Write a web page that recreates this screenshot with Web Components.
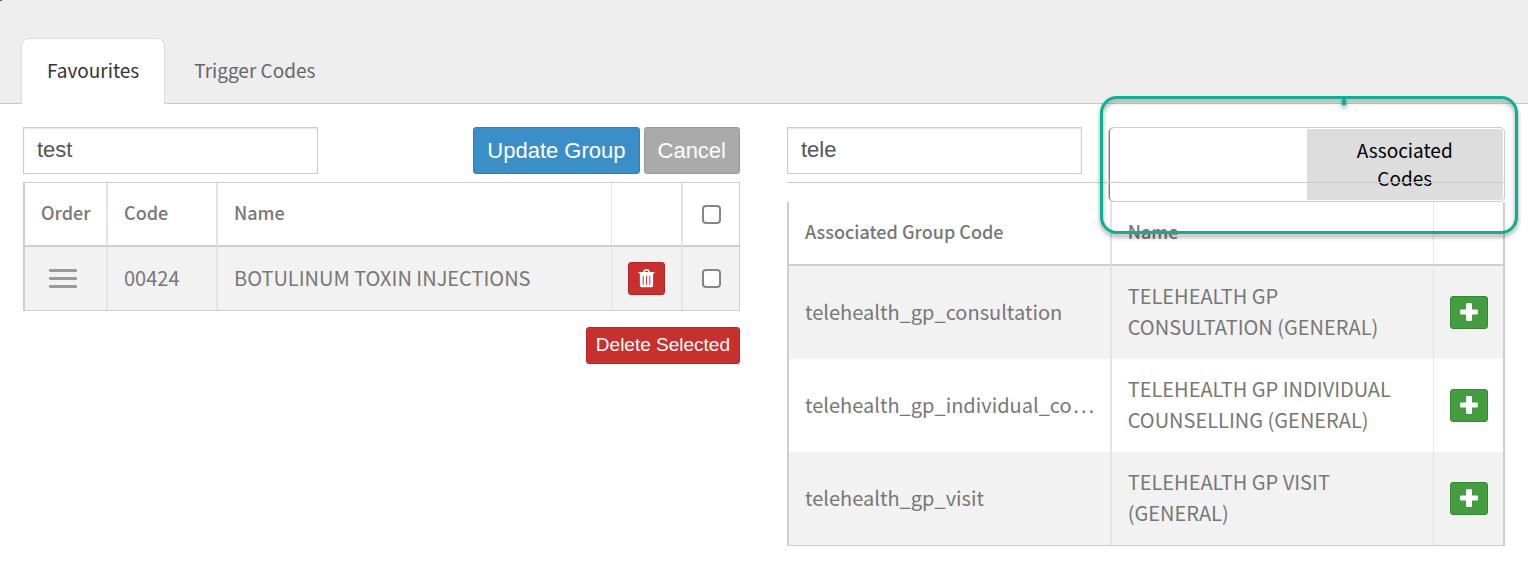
<!DOCTYPE html>
<html lang="en">
<head>
<meta charset="utf-8">
<title>Favourites</title>
<style>
  body {
    margin: 0;
    background: #fff;
    color: #777;
    font: 19px/31px "Noto Sans CJK SC", "Noto Sans", sans-serif;
  }
</style>
</head>
<body>
<favourites-page></favourites-page>

<script>
const define = (name, html, setup) => {
  const template = document.createElement('template');
  template.innerHTML = '<style>*{box-sizing:border-box}</style>' + html;
  customElements.define(name, class extends HTMLElement {
    constructor() {
      super();
      this.attachShadow({ mode: 'open' }).append(template.content.cloneNode(true));
    }
    connectedCallback() { if (setup) setup(this, this.shadowRoot); }
  });
};

define('tab-bar', `
  <style>
    :host { display: block; background: #eee; border-bottom: 1px solid #ccc; padding: 38px 21px 0; position: relative; }
    nav { display: flex; margin-bottom: -1px; }
    .corner { position: absolute; left: 0; top: 0; width: 2px; height: 1px; background: #2f6f95; }
  </style>
  <span class="corner"></span>
  <nav><slot></slot></nav>
`);

define('tab-link', `
  <style>
    :host { display: block; }
    a { display: block; padding: 15px 25px; height: 66px; border: 1px solid transparent; border-bottom: 0;
        border-radius: 8px 8px 0 0; color: #66666a; text-decoration: none; }
    :host([active]) a { background: #fff; border-color: #ddd; color: #333338; }
    :host(:not([active])) a { padding-left: 28px; }
  </style>
  <a href="#"><slot></slot></a>
`);

define('text-field', `
  <style>
    :host { display: block; flex: 0 0 295px; }
    input { display: block; width: 100%; height: 47px; margin: 0; padding: 0 13px 2px; border: 1px solid #ccc; border-radius: 0;
            background: #fff; box-shadow: inset 0 1px 2px rgba(0,0,0,.1); color: #555; outline: 0;
            font: 22px "Liberation Sans", Arial, sans-serif; }
  </style>
  <input type="text">
`, (el, root) => {
  const input = root.querySelector('input');
  input.value = el.getAttribute('value');
  input.setAttribute('aria-label', el.getAttribute('label'));
});

define('action-button', `
  <style>
    :host { display: block; }
    button { display: block; height: 47px; margin: 0; padding: 0 13px; border: 1px solid #347fb2; border-radius: 3px;
             background: #3b8fc8; color: #fff; font: 22px "Liberation Sans", Arial, sans-serif; white-space: nowrap; }
    :host([kind=muted]) button { background: #aaa; border-color: #999; }
    :host([kind=danger]) button { background: #c92f2c; border-color: #b22a27; height: 37px; padding: 0 9px 2px; font-size: 19px; }
  </style>
  <button type="button"><slot></slot></button>
`);

define('icon-button', `
  <style>
    :host { display: block; }
    button { display: flex; align-items: center; justify-content: center; width: 38px; height: 33px; margin: 0 auto; padding: 0;
             border: 1px solid #3a8535; border-radius: 3px; background: #449d3f; }
    :host([icon=trash]) button { width: 37px; background: #c92f2c; border-color: #b22a27; }
    svg { display: none; fill: #fff; }
    :host([icon=trash]) .trash, :host([icon=plus]) .plus { display: block; }
    .plus { margin-bottom: 2px; }
  </style>
  <button type="button">
    <svg class="trash" width="17" height="19" viewBox="0 0 18 20"><path fill-rule="evenodd" d="M5.4 3 6.3 1Q6.700.3 7.500.3h3q.8 0 1.200.7l.9 2H17q.5 0 .5.500v.8q0 .5-.5.500h-1v12.500q0 2-1.800 2H3.800Q2 19.300 2 17.300V4.800H1q-.5 0-.5-.5v-.8Q.5 3 1 3zM7.200 3h3.600l-.5-1.200H7.700zM5 7v9.500h1V7zm3.500 0v9.500h1V7zM12 7v9.500h1V7z"/></svg>
    <svg class="plus" width="18" height="18" viewBox="0 0 18 18"><path d="M7.200 0h3.600q1.200 0 1.200 1.200V6.500h4.800Q18 6.500 18 7.700v2.600q0 1.200-1.200 1.200H12v5.300q0 1.200-1.200 1.200H7.200Q6 18 6 16.800v-5.300H1.200Q0 11.500 0 10.300V7.700Q0 6.500 1.200 6.500H6V1.200Q6 0 7.200 0z"/></svg>
  </button>
`, (el, root) => root.querySelector('button').setAttribute('aria-label', el.getAttribute('label')));

define('check-box', `
  <style>
    :host { display: block; }
    input { appearance: none; display: block; width: 19px; height: 19px; margin: 0 auto; border: 2px solid #868686; border-radius: 4px; background: #fff; }
  </style>
  <input type="checkbox">
`, (el, root) => root.querySelector('input').setAttribute('aria-label', el.getAttribute('label')));

define('drag-handle', `
  <style>
    :host { display: grid; gap: 5px; width: 28px; margin: 0 9px; }
    i { height: 3px; border-radius: 1px; background: #999; }
  </style>
  <i></i><i></i><i></i>
`);

const tableStyle = `
  :host { display: block; }
  table { width: 100%; table-layout: fixed; border-collapse: separate; border-spacing: 0; border: 1px solid #ccced0; border-left: 2px solid #cdcdd2; font-size: 20px; }
  th, td { height: 63px; padding: 0 15px 3px 16px; text-align: left; vertical-align: middle; font-weight: 400;
           border-right: 2px solid #e4e4e4; }
  th { height: 64px; font-weight: 500; font-size: 18px; border-bottom: 2px solid #cdcdd2; }
  th:last-child, td:last-child { border-right: 0; }
  th.control, td.control { padding: 0 15px; }
  tbody tr:nth-child(odd) { background: #f2f2f2; }
`;

define('codes-table', `
  <style>${tableStyle}
    th.thin, td.thin { border-right-width: 1px; }
  </style>
  <table>
    <colgroup><col style="width:83px"><col style="width:110px"><col><col style="width:71px"><col style="width:56px"></colgroup>
    <thead><tr><th>Order</th><th>Code</th><th class="thin">Name</th><th></th><th class="control"><check-box label="Select all"></check-box></th></tr></thead>
    <tbody><tr>
      <td class="control"><drag-handle></drag-handle></td><td>00424</td><td class="thin">BOTULINUM TOXIN INJECTIONS</td>
      <td class="control"><icon-button icon="trash" label="Delete"></icon-button></td>
      <td class="control"><check-box label="Select 00424"></check-box></td>
    </tr></tbody>
  </table>
`);

define('results-table', `
  <style>${tableStyle}
    table { border-top: 0; border-right: 2px solid #cdcdd2; }
    td { height: 93px; }
    td:first-child { white-space: nowrap; }
    th:nth-child(2), td:nth-child(2) { border-right-width: 1px; }
    .dots { font: 24px/24px "Liberation Sans", Arial, sans-serif; }
  </style>
  <table>
    <colgroup><col style="width:45.2%"><col><col style="width:69px"></colgroup>
    <thead><tr><th>Associated Group Code</th><th>Name</th><th></th></tr></thead>
    <tbody>
      <tr><td>telehealth_gp_consultation</td><td>TELEHEALTH GP CONSULTATION (GENERAL)</td><td class="control"><icon-button icon="plus" label="Add"></icon-button></td></tr>
      <tr><td>telehealth_gp_individual_co<span class="dots">…</span></td><td>TELEHEALTH GP INDIVIDUAL COUNSELLING (GENERAL)</td><td class="control"><icon-button icon="plus" label="Add"></icon-button></td></tr>
      <tr><td>telehealth_gp_visit</td><td>TELEHEALTH GP VISIT (GENERAL)</td><td class="control"><icon-button icon="plus" label="Add"></icon-button></td></tr>
    </tbody>
  </table>
`);

define('code-switch', `
  <style>
    :host { display: block; flex: 0 0 397px; position: relative; }
    .box { display: grid; grid-template-columns: 1fr 1fr; height: 75px; padding: 1px; border: 1px solid #ccc; border-radius: 5px; box-shadow: inset 1px 0 #3b8fc8; background: #fff; }
    button { margin: 0; padding: 0 30px 2px; border: 0; background: none; color: #000; font: 19px/28px "Noto Sans CJK SC", "Noto Sans", sans-serif; }
    .on { background: #ddd; border-radius: 0 3px 3px 0; }
    .callout { position: absolute; z-index: 2; inset: -31px -13px -32px -8px; border: 3px solid #0ab093; border-radius: 17px;
               filter: drop-shadow(0 3px 2px rgba(0,0,0,.4)); pointer-events: none; }
    .callout::before { content: ""; position: absolute; top: 0; left: 239px; width: 4px; height: 6px; background: #0ab093; }
  </style>
  <div class="box"><button type="button" aria-label="Codes"></button><button type="button" class="on">Associated Codes</button></div>
  <div class="callout"></div>
`);

define('favourites-page', `
  <style>
    :host { display: block; }
    main { display: grid; grid-template-columns: minmax(0,717fr) minmax(0,718fr); gap: 47px; padding: 23px 23px 20px; align-items: start; }
    .bar { display: flex; align-items: flex-start; gap: 4px; }
    .bar text-field { margin-right: auto; }
    .left .bar { margin-bottom: 8px; }
    .foot { display: flex; justify-content: flex-end; margin-top: 16px; }
    .right .bar { position: relative; }
    .right .bar::after { content: ""; position: absolute; z-index: 1; left: 0; right: 0; top: 55px; height: 1px; background: #ccc; pointer-events: none; }
  </style>
  <tab-bar>
    <tab-link active>Favourites</tab-link>
    <tab-link>Trigger Codes</tab-link>
  </tab-bar>
  <main>
    <section class="left">
      <div class="bar">
        <text-field value="test" label="Group name"></text-field>
        <action-button>Update Group</action-button>
        <action-button kind="muted">Cancel</action-button>
      </div>
      <codes-table></codes-table>
      <div class="foot"><action-button kind="danger">Delete Selected</action-button></div>
    </section>
    <section class="right">
      <div class="bar">
        <text-field value="tele" label="Search codes"></text-field>
        <code-switch></code-switch>
      </div>
      <results-table></results-table>
    </section>
  </main>
`);
</script>
</body>
</html>
